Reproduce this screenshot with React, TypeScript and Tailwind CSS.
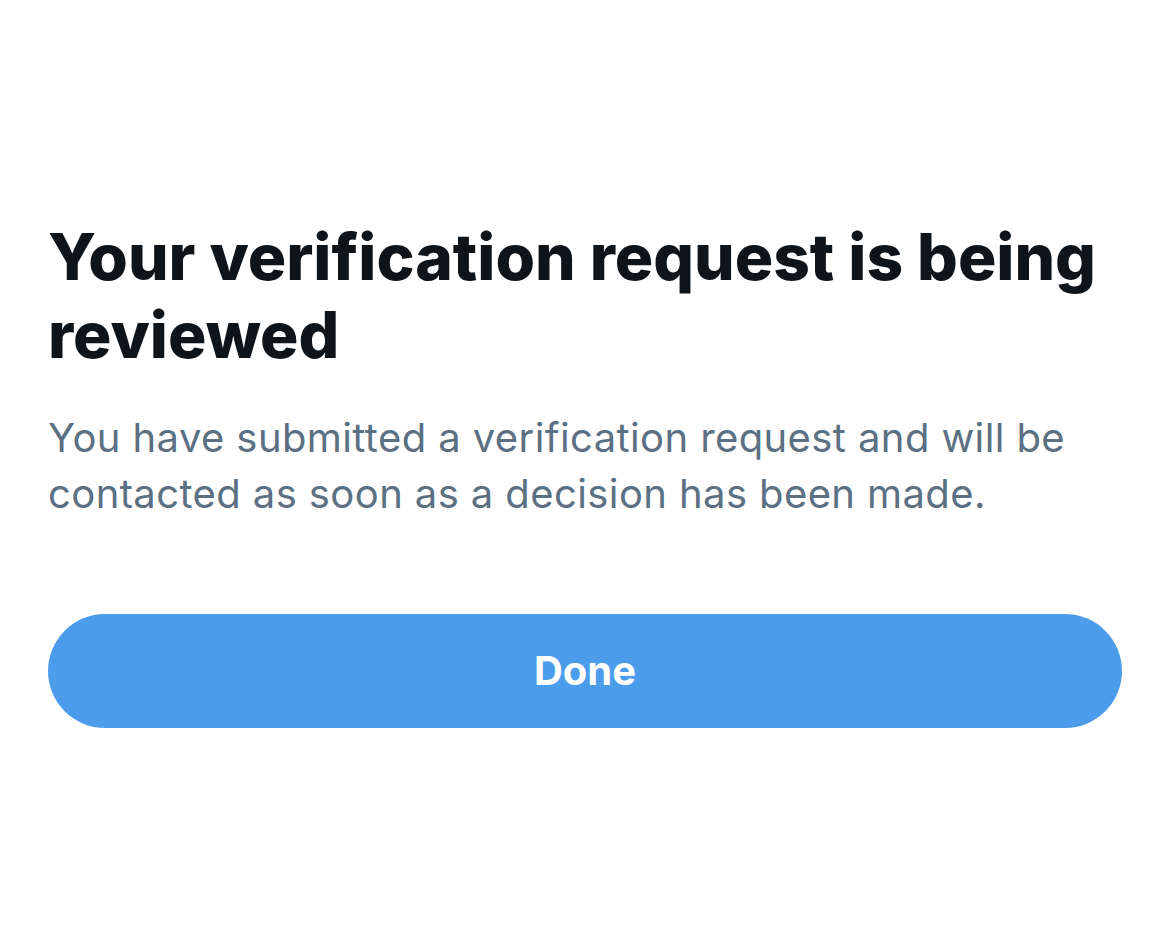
export default function App() {
  return (
    <div className="min-h-[938px] w-[1170px] bg-white font-['Inter','Liberation_Sans',sans-serif]">
      <div className="px-12 pt-[218px]">
        <h1 className="text-[64px] leading-[78px] font-extrabold text-[#0f1419]">
          Your verification request is being reviewed
        </h1>
        <p className="mt-[36px] text-[40px] leading-[56px] tracking-[0.4px] text-[#5b7083]">
          You have submitted a verification request and will be contacted as soon as a decision has been made.
        </p>
        <button className="mt-[92px] flex h-[114px] w-full items-center justify-center rounded-full bg-[#4b9deb] text-[40px] font-bold text-white">
          Done
        </button>
      </div>
    </div>
  );
}
